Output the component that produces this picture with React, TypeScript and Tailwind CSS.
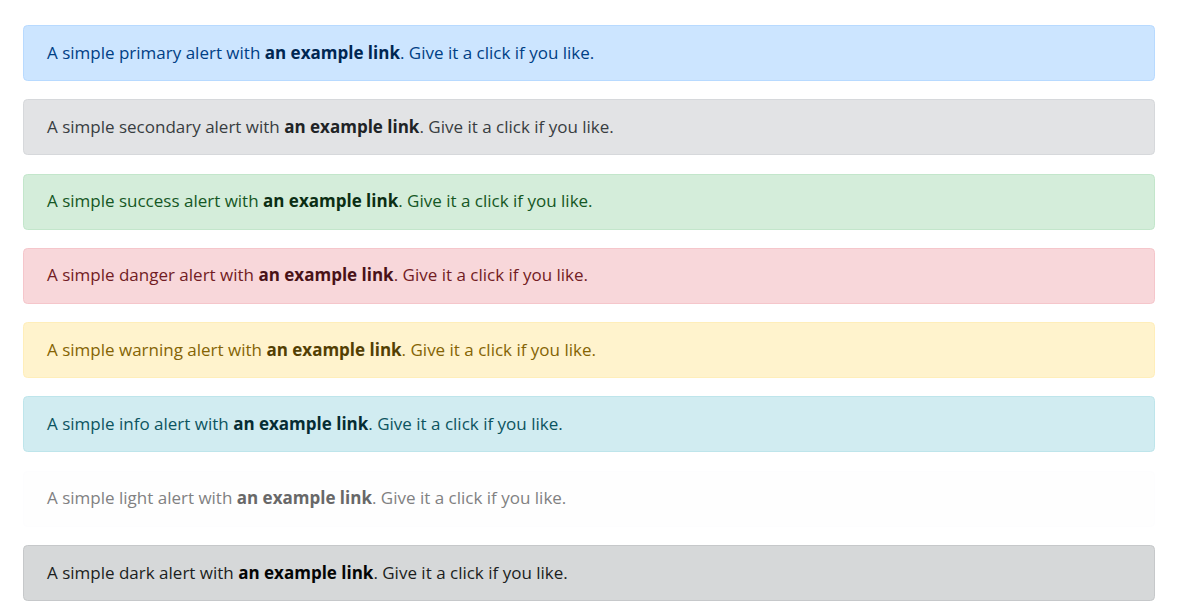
type Variant = {
    name: string;
    box: string;
    link: string;
};

const variants: Variant[] = [
    { name: 'primary', box: 'bg-[#cce5ff] border-[#b8daff] text-[#004085]', link: 'text-[#002752]' },
    { name: 'secondary', box: 'bg-[#e2e3e5] border-[#d6d8db] text-[#383d41]', link: 'text-[#202326]' },
    { name: 'success', box: 'bg-[#d4edda] border-[#c3e6cb] text-[#155724]', link: 'text-[#0b2e13]' },
    { name: 'danger', box: 'bg-[#f8d7da] border-[#f5c6cb] text-[#721c24]', link: 'text-[#491217]' },
    { name: 'warning', box: 'bg-[#fff3cd] border-[#ffeeba] text-[#856404]', link: 'text-[#533f03]' },
    { name: 'info', box: 'bg-[#d1ecf1] border-[#bee5eb] text-[#0c5460]', link: 'text-[#062c33]' },
    { name: 'light', box: 'bg-[#fefefe] border-[#fdfdfe] text-[#818182]', link: 'text-[#686868]' },
    { name: 'dark', box: 'bg-[#d6d8d9] border-[#c6c8ca] text-[#1b1e21]', link: 'text-[#040505]' },
];

export default function App() {
    return (
        <div className="min-h-[609px] bg-white px-[22.5px] pt-[25px] font-['Open_Sans',sans-serif] text-[17px] leading-[27px]">
            <div className="flex flex-col gap-[18.3px]">
                {variants.map((v) => (
                    <div
                        key={v.name}
                        role="alert"
                        className={`rounded-[4.5px] border px-[23.5px] pt-[12.5px] pb-[14.5px] ${v.box}`}
                    >
                        A simple {v.name} alert with{' '}
                        <a href="#" className={`font-bold ${v.link}`}>
                            an example link
                        </a>
                        . Give it a click if you like.
                    </div>
                ))}
            </div>
        </div>
    );
}
